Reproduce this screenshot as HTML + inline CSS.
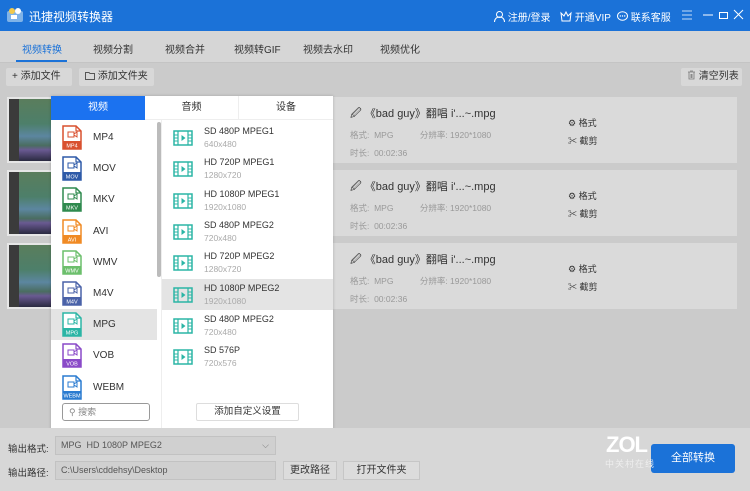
<!DOCTYPE html>
<html><head><meta charset="utf-8">
<style>
*{box-sizing:border-box;margin:0;padding:0}
body{width:750px;height:491px;overflow:hidden;position:relative;background:#cbcbcb;font-family:"Liberation Sans","Noto Sans CJK SC",sans-serif;font-size:10px;color:#333}
.abs{position:absolute;white-space:nowrap}
.title{left:0;top:0;width:750px;height:31px;background:#1b72d8;color:#fff}
.tabs{left:0;top:31px;width:750px;height:32px;background:#d6d6d6;border-bottom:1px solid #c4c4c4}
.tabs span{position:absolute;top:10px;font-size:10px;color:#333}
.tb{top:68px;height:18px;background:#d8d8d8;border-radius:2px;font-size:10px;line-height:18px;padding:0 6px;color:#333}
.card{left:7px;width:730px;height:66px;background:#dadada}
.thumb{left:0;top:0;width:50px;height:66px;background:linear-gradient(90deg,#3b3b3b 0 10px,transparent 10px),linear-gradient(180deg,#5a7d5c 0,#4d7f6a 40%,#5c86a0 60%,#4a6d60 75%,#6a5a92 82%,#2a2a40 100%);border:2px solid #e6e6e6}
.fn{font-size:11px;color:#333}
.meta{font-size:8.5px;color:#999}
.panel{left:51px;top:96px;width:282px;height:334px;background:#fff;box-shadow:0 0 3px rgba(0,0,0,.2)}
.ptab{top:0;height:24px;line-height:24px;text-align:center;width:94px;font-size:10px;border-bottom:1px solid #eee}
.li{left:0;width:106px;height:31px}
.li span{position:absolute;left:42px;top:10px;font-size:10px;color:#333}
.ri{left:111px;width:171px;height:31px}
.ri .a{position:absolute;left:42px;top:4px;font-size:9px;color:#333}
.ri .b{position:absolute;left:42px;top:17px;font-size:8.5px;color:#aaa}
.bot{left:0;top:428px;width:750px;height:63px;background:#d7d7d7}
.inp{background:#d0d0d0;border:1px solid #c2c2c2;font-size:9px;color:#555;line-height:17px;padding-left:5px}
.btn{background:#dcdcdc;border:1px solid #c6c6c6;font-size:10px;text-align:center;line-height:17px}
</style></head><body>
<div class="abs title">
 <svg class="abs" style="left:7px;top:7px" width="18" height="16"><rect x="0" y="4" width="16" height="11" rx="2" fill="#7fb3e8"/><circle cx="5" cy="4" r="3" fill="#f2c94c"/><circle cx="11" cy="4" r="3" fill="#fff"/><rect x="4" y="8" width="6" height="4" fill="#fff"/></svg>
 <div class="abs" style="left:29px;top:8px;font-size:12px">迅捷视频转换器</div>
 <div class="abs" style="left:494px;top:9px;font-size:10px">
  <svg width="11" height="11" style="vertical-align:-1px"><circle cx="5.5" cy="3.5" r="3" fill="none" stroke="#fff"/><path d="M0.5 11c0-3 2-5 5-5s5 2 5 5" fill="none" stroke="#fff"/></svg> 注册/登录
 </div>
 <div class="abs" style="left:560px;top:9px;font-size:10px">
  <svg width="12" height="11" style="vertical-align:-1px"><path d="M1 2l3 3 2-4 2 4 3-3-1 8H2z" fill="none" stroke="#fff"/></svg> 开通VIP
 </div>
 <div class="abs" style="left:617px;top:9px;font-size:10px">
  <svg width="11" height="11" style="vertical-align:-1px"><ellipse cx="5.5" cy="5" rx="5" ry="4.3" fill="none" stroke="#fff"/><circle cx="3.3" cy="5" r=".7" fill="#fff"/><circle cx="5.5" cy="5" r=".7" fill="#fff"/><circle cx="7.7" cy="5" r=".7" fill="#fff"/></svg> 联系客服
 </div>
 <svg class="abs" style="left:680px;top:9px" width="64" height="12"><path d="M2 2h10M2 6h10M2 10h10" stroke="#fff" stroke-width=".8"/><path d="M23 6h10" stroke="#fff"/><rect x="39.5" y="3.5" width="8" height="6" fill="none" stroke="#fff"/><path d="M54 1l9 9M63 1l-9 9" stroke="#fff"/></svg>
</div>
<div class="abs tabs">
 <span style="left:22px;color:#1b72d8">视频转换</span>
 <div class="abs" style="left:16px;top:29px;width:51px;height:2px;background:#1b72d8"></div>
 <span style="left:93px">视频分割</span>
 <span style="left:165px">视频合并</span>
 <span style="left:234px">视频转GIF</span>
 <span style="left:303px">视频去水印</span>
 <span style="left:380px">视频优化</span>
</div>
<div class="abs tb" style="left:6px;width:66px">+ 添加文件</div>
<div class="abs tb" style="left:79px;width:75px"><svg width="10" height="9" style="vertical-align:-1px"><path d="M.5 1.5h3.5l1 1h4.5v6H.5z" fill="none" stroke="#555"/></svg> 添加文件夹</div>
<div class="abs tb" style="left:681px;width:61px"><svg width="9" height="10" style="vertical-align:-1px"><path d="M1 2h7M3 1h3M2 2v7h5V2M4 4v4M5 4v4" fill="none" stroke="#777" stroke-width=".8"/></svg> 清空列表</div>

<div class="abs card" style="top:97px"><div class="abs thumb"></div></div>
<div class="abs card" style="top:170px"><div class="abs thumb"></div></div>
<div class="abs card" style="top:243px"><div class="abs thumb"></div></div>

<div class="abs" style="left:350px;top:105px;width:300px">
 <div class="fn">🖉 《bad guy》翻唱 i'...~.mpg</div>
 <div class="meta" style="margin-top:5px">格式:&nbsp; MPG <span style="margin-left:24px">分辨率: 1920*1080</span></div>
 <div class="meta" style="margin-top:6px">时长:&nbsp; 00:02:36</div>
</div>
<div class="abs" style="left:350px;top:178px;width:300px">
 <div class="fn">🖉 《bad guy》翻唱 i'...~.mpg</div>
 <div class="meta" style="margin-top:5px">格式:&nbsp; MPG <span style="margin-left:24px">分辨率: 1920*1080</span></div>
 <div class="meta" style="margin-top:6px">时长:&nbsp; 00:02:36</div>
</div>
<div class="abs" style="left:350px;top:251px;width:300px">
 <div class="fn">🖉 《bad guy》翻唱 i'...~.mpg</div>
 <div class="meta" style="margin-top:5px">格式:&nbsp; MPG <span style="margin-left:24px">分辨率: 1920*1080</span></div>
 <div class="meta" style="margin-top:6px">时长:&nbsp; 00:02:36</div>
</div>
<div class="abs" style="left:568px;top:114px;font-size:9px;line-height:18px">⚙ 格式<br>✂ 截剪</div>
<div class="abs" style="left:568px;top:187px;font-size:9px;line-height:18px">⚙ 格式<br>✂ 截剪</div>
<div class="abs" style="left:568px;top:260px;font-size:9px;line-height:18px">⚙ 格式<br>✂ 截剪</div>

<div class="abs panel">
 <div class="abs ptab" style="left:0;background:#1b72f0;color:#fff;border:none">视频</div>
 <div class="abs ptab" style="left:94px;border-right:1px solid #eee">音频</div>
 <div class="abs ptab" style="left:188px">设备</div>
 <div class="abs" style="left:106px;top:24px;width:5px;height:310px;background:#fff;border-right:1px solid #eee"></div>
 <div class="abs" style="left:106px;top:26px;width:4px;height:155px;background:#bbb;border-radius:2px"></div>
 <div id="L"></div><div id="R"></div>
 <div class="abs" style="left:11px;top:307px;width:88px;height:18px;border:1px solid #999;border-radius:3px;font-size:9px;color:#888;line-height:16px;padding-left:6px">⚲ 搜索</div>
 <div class="abs" style="left:145px;top:307px;width:103px;height:18px;border:1px solid #ddd;border-radius:2px;font-size:9.5px;text-align:center;line-height:16px">添加自定义设置</div>
</div>
<script>
var L=[["MP4","#d9502f"],["MOV","#2e5aa8"],["MKV","#2f8a4e"],["AVI","#f08a24"],["WMV","#6cbf6c"],["M4V","#4a62a8"],["MPG","#2bb5a5"],["VOB","#8a4ac8"],["WEBM","#2a7bd0"]];
var h="";
L.forEach(function(x,i){var y=26+i*31.2;
h+='<div class="abs li" style="top:'+y+'px;'+(i==6?'background:#e4e4e4':'')+'"><svg class="abs" style="left:11px;top:3px" width="20" height="25"><path d="M1 1h13l5 5v18H1z" fill="#fff" stroke="'+x[1]+'" stroke-width="1.5"/><path d="M14 1v5h5" fill="none" stroke="'+x[1]+'" stroke-width="1.2"/><rect x="6" y="7" width="6" height="5" fill="none" stroke="'+x[1]+'"/><path d="M12 9l3-2v5l-3-2" fill="none" stroke="'+x[1]+'"/><rect x="1" y="16" width="18" height="8" fill="'+x[1]+'"/><text x="10" y="22.5" font-size="5.5" fill="#fff" text-anchor="middle" font-family="Liberation Sans">'+x[0]+'</text></svg><span>'+x[0]+'</span></div>';});
document.getElementById("L").innerHTML=h;
var R=[["SD 480P MPEG1","640x480"],["HD 720P MPEG1","1280x720"],["HD 1080P MPEG1","1920x1080"],["SD 480P MPEG2","720x480"],["HD 720P MPEG2","1280x720"],["HD 1080P MPEG2","1920x1080"],["SD 480P MPEG2","720x480"],["SD 576P","720x576"]];
h="";
R.forEach(function(x,i){var y=26+i*31.3;
h+='<div class="abs ri" style="top:'+y+'px;'+(i==5?'background:#e4e4e4':'')+'"><svg class="abs" style="left:11px;top:8px" width="20" height="16"><rect x="1" y="1" width="18" height="14" fill="none" stroke="#2bb5a5" stroke-width="1.5"/><path d="M5 1v14M15 1v14" stroke="#2bb5a5" stroke-width="1.2"/><path d="M1 5h4M1 8h4M1 11h4M15 5h4M15 8h4M15 11h4" stroke="#2bb5a5"/><path d="M8.5 5l4 3-4 3z" fill="#2bb5a5"/></svg><div class="a">'+x[0]+'</div><div class="b">'+x[1]+'</div></div>';});
document.getElementById("R").innerHTML=h;
</script>

<div class="abs bot">
 <div class="abs" style="left:8px;top:13px;font-size:9.5px">输出格式:</div>
 <div class="abs inp" style="left:55px;top:8px;width:221px;height:19px">MPG&nbsp; HD 1080P MPEG2<span style="position:absolute;right:6px;color:#777">⌵</span></div>
 <div class="abs" style="left:8px;top:37px;font-size:9.5px">输出路径:</div>
 <div class="abs inp" style="left:55px;top:33px;width:221px;height:19px">C:\Users\cddehsy\Desktop</div>
 <div class="abs btn" style="left:283px;top:33px;width:54px;height:19px">更改路径</div>
 <div class="abs btn" style="left:343px;top:33px;width:77px;height:19px">打开文件夹</div>
 <div class="abs" style="left:651px;top:16px;width:84px;height:29px;background:#1b72d8;border-radius:3px;color:#fff;font-size:11px;text-align:center;line-height:29px">全部转换</div>
 <div class="abs" style="left:606px;top:4px;color:#fff;font-size:22px;font-weight:bold;letter-spacing:-1px">ZOL</div>
 <div class="abs" style="left:605px;top:29px;color:#eee;font-size:9px;letter-spacing:1px">中关村在线</div>
</div>
</body></html>
